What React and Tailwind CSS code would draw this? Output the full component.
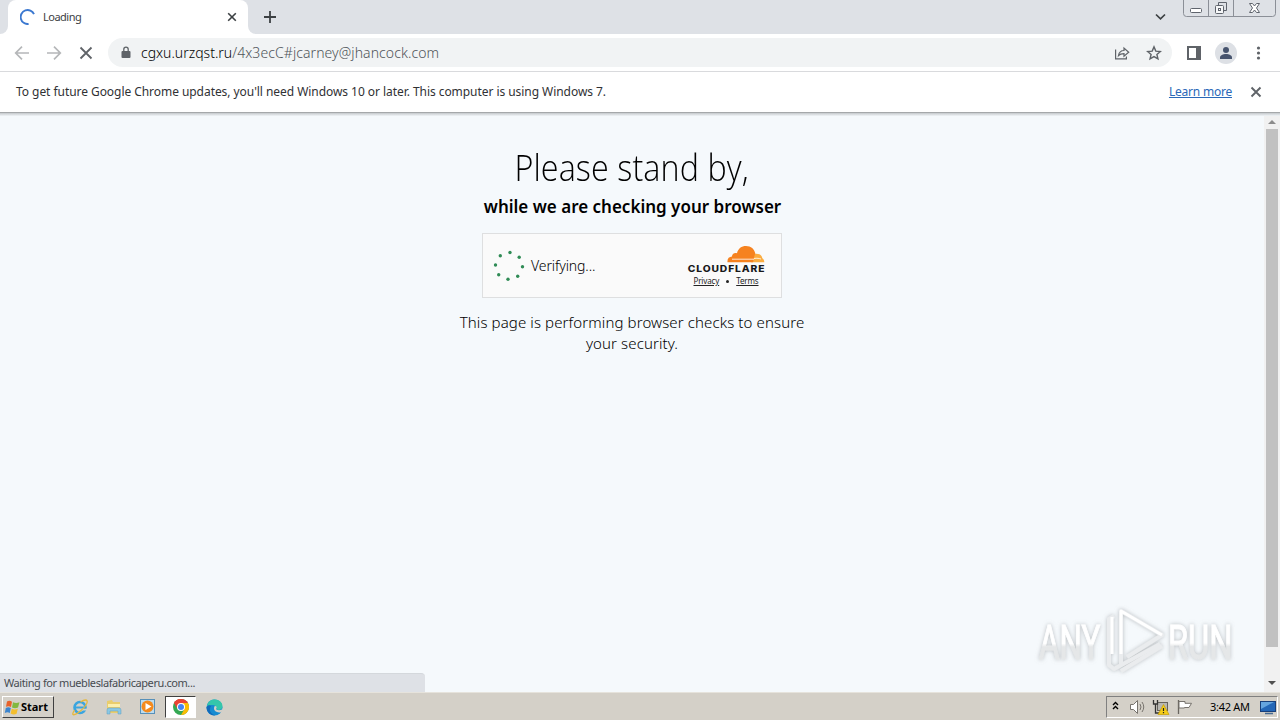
import React from "react";

function TabStrip() {
  return (
    <div className="flex h-[34px] shrink-0 items-start bg-[#dee1e6]">
      <div className="flex h-[34px] w-2 items-end bg-white">
        <div className="h-full w-full rounded-br-lg bg-[#dee1e6]" />
      </div>
      <div className="flex h-[34px] w-60 items-center rounded-t-lg bg-white pl-3 pr-[10px]">
        <svg className="h-4 w-4" viewBox="0 0 16 16" fill="none">
          <path d="M14 5.1A7 7 0 1 0 8.6 15" stroke="#3b78d0" strokeWidth="1.9" />
        </svg>
        <span className="ml-[7px] flex-1 text-[11px] leading-4 tracking-[-0.5px] text-[#3c4043]">Loading</span>
        <svg className="h-3 w-3" viewBox="0 0 12 12">
          <path d="M2.200 2.200l7.600 7.600M9.800 2.200L2.200 9.800" stroke="#3c4043" strokeWidth="1.600" />
        </svg>
      </div>
      <div className="h-[34px] w-2 bg-white">
        <div className="h-full w-full rounded-bl-lg bg-[#dee1e6]" />
      </div>
      <svg className="ml-2 mt-[11px] h-3 w-3" viewBox="0 0 12 12">
        <path d="M6 0v12M0 6h12" stroke="#3c4043" strokeWidth="1.800" />
      </svg>
      <div className="flex-1" />
      <svg className="mr-[17px] mt-3 h-[10px] w-[11px]" viewBox="0 0 11 10" fill="none">
        <path d="M1 2.500l4.500 4.400L10 2.500" stroke="#3c4043" strokeWidth="1.700" />
      </svg>
      <svg className="mr-[3px] h-[18px] w-[94px]" viewBox="0 0 94 18" fill="none">
        <path d="M.5 0v13.500q0 3 3 3h86q3 0 3-3V0M25.500 0v16M50.500 0v16" stroke="#8b8f97" />
        <rect x="7.500" y="8.500" width="11" height="4" rx="1" fill="#fff" stroke="#5f646d" />
        <path d="M35.500 5.500v-3h8v8h-3" stroke="#5f646d" />
        <rect x="32.500" y="5.500" width="8" height="8" rx="1" fill="#f6f7f8" stroke="#5f646d" />
        <rect x="35.500" y="8.500" width="2" height="2" fill="#fff" stroke="#5f646d" />
        <path d="M66.500 3.500h3l2 2.500 2-2.500h3L73.500 8l3 4.500h-3l-2-2.500-2 2.500h-3l3-4.500z" fill="#fff" stroke="#5f646d" />
      </svg>
    </div>
  );
}

function Toolbar() {
  return (
    <div className="flex h-[38px] shrink-0 items-center border-b border-[#d9dadd] bg-white">
      <svg className="ml-[14px] h-4 w-4" viewBox="0 0 16 16" fill="none" stroke="#b5b7b9" strokeWidth="1.700">
        <path d="M15 8H2M8 1.700L1.700 8 8 14.300" />
      </svg>
      <svg className="ml-4 h-4 w-4" viewBox="0 0 16 16" fill="none" stroke="#b5b7b9" strokeWidth="1.700">
        <path d="M1 8h13M8 1.700L14.300 8 8 14.300" />
      </svg>
      <svg className="ml-4 h-4 w-4" viewBox="0 0 16 16" fill="none" stroke="#5f6368" strokeWidth="1.800">
        <path d="M2.500 2.500l11 11M13.500 2.500l-11 11" />
      </svg>
      <div className="ml-[14px] flex h-[29px] w-[1064px] items-center rounded-full bg-[#f1f3f4]">
        <svg className="ml-3 h-[14px] w-3" viewBox="0 0 12 14">
          <rect x="1.500" y="5" width="9" height="7" rx="1" fill="#5f6368" />
          <path d="M3.800 5.500V3.300a2.200 2.200 0 0 1 4.400 0v2.200" fill="none" stroke="#5f6368" strokeWidth="1.300" />
        </svg>
        <span className="ml-[9px] flex-1 whitespace-nowrap text-[14px] font-light leading-5 text-[#4f5459]">
          <span className="tracking-normal text-black">cgxu.urzqst.ru</span>
          <span className="tracking-[0.080px]">/4x3ecC#jcarney@jhancock.com</span>
        </span>
        <svg className="h-4 w-4" viewBox="0 0 16 16" fill="none" stroke="#5f6368" strokeWidth="1.200">
          <path d="M1.600 4.500v9.400h10.800v-2.500M4.500 10.500c.6-3.500 2.500-5 5.500-5V3l4.700 4.200L10 11.300V8.700c-2.500 0-4.200.4-5.500 1.800z" />
        </svg>
        <svg className="ml-4 mr-[10px] h-4 w-4" viewBox="0 0 16 16" fill="none" stroke="#5f6368" strokeWidth="1.400">
          <path d="M8 1.900l1.800 4.200 4.600.4-3.500 3 1.050 4.400L8 11.600l-3.950 2.300 1.050-4.400-3.500-3 4.600-.4z" />
        </svg>
      </div>
      <svg className="ml-[15px] h-[14px] w-[14px]" viewBox="0 0 14 14">
        <rect x="1" y="1" width="12" height="12" fill="none" stroke="#5f6368" strokeWidth="2" />
        <rect x="9" y="1" width="4.500" height="12" fill="#5f6368" />
      </svg>
      <svg className="ml-[14px] h-[22px] w-[22px]" viewBox="0 0 22 22">
        <circle cx="11" cy="11" r="11" fill="#dde0e5" />
        <circle cx="11" cy="8" r="3" fill="#47546e" />
        <path d="M5 17v-1.500c0-2 3-3.500 6-3.500s6 1.500 6 3.500V17z" fill="#47546e" />
      </svg>
      <svg className="ml-4 h-4 w-4" viewBox="0 0 16 16" fill="#5f6368">
        <circle cx="5.500" cy="3" r="1.600" />
        <circle cx="5.500" cy="8" r="1.600" />
        <circle cx="5.500" cy="13" r="1.600" />
      </svg>
    </div>
  );
}

function InfoBar() {
  return (
    <div className="flex h-10 shrink-0 items-center bg-white pl-4">
      <span className="flex-1 whitespace-nowrap text-[12px] leading-4 tracking-[-0.053px] text-[#303134]">
        To get future Google Chrome updates, you'll need Windows 10 or later. This computer is using Windows 7.
      </span>
      <a className="whitespace-nowrap text-[12px] leading-4 tracking-[-0.220px] text-[#2a68b8] underline">Learn more</a>
      <svg className="ml-[18px] mr-[18px] h-3 w-3" viewBox="0 0 12 12">
        <path d="M1.500 1.500l9 9M10.500 1.500l-9 9" stroke="#5f6368" strokeWidth="1.900" />
      </svg>
    </div>
  );
}

function CloudflareLogo() {
  return (
    <svg className="h-[27px] w-[78px]" viewBox="0 0 78 27">
      <path d="M64 17.300c1-3 .7-5.500 2-8 6-1.500 9 1 9.300 4 1.500.8 2 2.200 2 4z" fill="#fbad41" />
      <path d="M40.500 17.300c-.4-3.500 1.500-5.500 4.500-5.700 0-3 2.800-4.300 5-3.300C51 3.500 54.500 1 59 1c5 0 8.500 3 9.300 7.500-1.200 2.500-1.300 5.500-2.300 8.800z" fill="#f6821f" />
      <path d="M45 14.200h22M67 13.500c3-.6 5.500 0 7 .5" stroke="#fff" strokeWidth=".8" fill="none" />
      <text transform="translate(.8 26.500) scale(1.170 1)" textLength="65.500" lengthAdjust="spacing" fontFamily="Inter, sans-serif" fontWeight="800" fontSize="8.800" fill="#18181b">CLOUDFLARE</text>
    </svg>
  );
}

function Challenge() {
  return (
    <div className="mt-[14px] flex h-[65px] w-[300px] items-start border border-[#dedfe0] bg-[#fafafa]">
      <svg className="ml-[10px] mt-4 h-8 w-8" viewBox="0 0 32 32" fill="#2f8b55">
        <circle cx="17" cy="2.500" r="1.700" />
        <circle cx="26.200" cy="7.200" r="1.700" />
        <circle cx="29.500" cy="16.700" r="1.700" />
        <circle cx="24.700" cy="26.200" r="1.700" />
        <circle cx="15" cy="29.300" r="1.700" />
        <circle cx="5.700" cy="24.700" r="1.700" />
        <circle cx="2.500" cy="15" r="1.700" />
        <circle cx="7.300" cy="5.700" r="1.700" />
      </svg>
      <span className="ml-[6px] mt-[22px] flex-1 text-[14px] font-light leading-5 tracking-[-0.100px] text-black">Verifying...</span>
      <div className="mr-4 mt-[11px] flex flex-col items-center">
        <CloudflareLogo />
        <div className="mt-[4px] flex items-center gap-[7px] text-[8px] leading-[10px] tracking-[-0.140px] text-[#232323]">
          <span className="underline">Privacy</span>
          <span className="h-[3px] w-[3px] rounded-full bg-[#232323]" />
          <span className="underline">Terms</span>
        </div>
      </div>
    </div>
  );
}

function Watermark() {
  return (
    <svg className="absolute left-[1030px] top-[492px] h-[74px] w-[218px]" viewBox="0 0 218 74">
      <defs>
        <linearGradient id="wm" x1="0" y1="0" x2="0" y2="1">
          <stop offset=".52" stopColor="#ffffff" />
          <stop offset=".58" stopColor="#e5e7e8" />
        </linearGradient>
        <filter id="glow" x="-10%" y="-20%" width="120%" height="140%">
          <feDropShadow dx="0" dy="0" stdDeviation="2" floodColor="#85898c" floodOpacity=".55" />
        </filter>
      </defs>
      <g filter="url(#glow)" fontFamily="Roboto, sans-serif" fontSize="49" fill="url(#wm)" stroke="url(#wm)" strokeWidth="1">
        <text transform="translate(9 54) scale(.640 1)">ANY</text>
        <text transform="translate(138 54) scale(.665 1)">RUN</text>
        <g fill="none" strokeWidth="4" strokeLinejoin="round">
          <path d="M84 11l-5 3v46l5 4 46-25" stroke="#eaecee" />
          <path d="M91 66l41-25M91 61V6l41 24-35 22" stroke="#eaecee" />
          <path d="M82 12v37M91 49V6l41 24" stroke="#fff" strokeWidth="3" />
        </g>
      </g>
    </svg>
  );
}

function Page() {
  return (
    <div className="relative flex h-[580px] shrink-0 border-t border-[#a5a8aa] bg-[#f5f9fc]">
      <div className="absolute inset-x-0 top-0 h-[3px] bg-linear-to-b from-[#c5c9cc] to-[#f0f4f7]" />
      <main className="flex flex-1 flex-col items-center text-black">
        <h1 className="mt-[31px] scale-x-[0.897] whitespace-nowrap font-['Open_Sans'] text-[36px] font-light leading-[48px] tracking-[0.100px]">Please stand by,</h1>
        <h2 className="ml-px mt-[3px] whitespace-nowrap text-[17px] font-semibold leading-6">while we are checking your browser</h2>
        <Challenge />
        <p className="mt-[14px] w-[370px] text-center text-[15px] font-light leading-[21px] tracking-[0.110px]">
          This page is performing browser checks to ensure your security.
        </p>
      </main>
      <div className="flex w-4 flex-col items-center bg-[#f1f1f1]">
        <svg className="h-4 w-4 shrink-0" viewBox="0 0 16 16"><path d="M4 11l4-4 4 4z" fill="#8c8c8c" /></svg>
        <div className="h-[518px] w-3 bg-[#c1c1c1]" />
        <div className="flex-1" />
        <svg className="mb-[1px] h-4 w-4 shrink-0" viewBox="0 0 16 16"><path d="M4 6h8l-4 4z" fill="#505050" /></svg>
      </div>
      <Watermark />
      <div className="absolute bottom-0 left-0 flex h-[19px] w-[425px] items-center rounded-tr border-t border-[#d4d8dc] bg-[#dee1e6] pl-1 text-[11px] leading-4 text-[#474b50]">
        <span className="whitespace-nowrap tracking-[-0.420px]">Waiting for muebleslafabricaperu.com...</span>
      </div>
    </div>
  );
}

function IeIcon() {
  return (
    <svg className="h-[18px] w-[18px]" viewBox="0 0 18 18" fill="none">
      <circle cx="9" cy="9.500" r="5.500" stroke="#3aa5df" strokeWidth="2.600" />
      <path d="M4 9.500h11" stroke="#3aa5df" strokeWidth="2" />
      <path d="M12 11.600h5" stroke="#d4d0c8" strokeWidth="1.800" />
      <path d="M3.500 12C-1 19 4 17.500 10 12.500S18 2 14.500 2C13 2 11 3 9.500 4" stroke="#e6b83c" strokeWidth="1.300" />
    </svg>
  );
}

function FolderIcon() {
  return (
    <svg className="h-[18px] w-[18px]" viewBox="0 0 18 18">
      <path d="M2 3l5-1 1 2h7v11H2z" fill="#e9cd6c" />
      <path d="M3 6h12v3H3z" fill="#fbefad" />
      <path d="M2 16v-4q0-2 2-2h10q2 0 2 2v4h-3v-3H5v3z" fill="#8ac8e4" stroke="#5d9fc0" strokeWidth=".5" />
    </svg>
  );
}

function PlayerIcon() {
  return (
    <svg className="h-[18px] w-[18px]" viewBox="0 0 18 18">
      <rect x="1.500" y="1.500" width="14" height="14" fill="#bcdcf0" stroke="#5790b9" />
      <circle cx="8.500" cy="8.500" r="6" fill="#f48a1d" />
      <path d="M6.500 5v7l6-3.500z" fill="#fff" />
    </svg>
  );
}

function ChromeIcon() {
  return (
    <svg className="h-4 w-4" viewBox="0 0 16 16">
      <circle cx="8" cy="8" r="8" fill="#34a853" />
      <path d="M8 8L1.070 4A8 8 0 0 1 14.930 4z" fill="#ea4335" />
      <path d="M8 4h6.930A8 8 0 0 1 8 16l3.500-6z" fill="#fbbc04" />
      <path d="M1.070 4A8 8 0 0 1 8 0v4.200L4.500 10z" fill="#ea4335" />
      <circle cx="8" cy="8" r="4" fill="#fff" />
      <circle cx="8" cy="8" r="3" fill="#4285f4" />
    </svg>
  );
}

function EdgeIcon() {
  return (
    <svg className="h-[17px] w-[17px]" viewBox="0 0 17 17">
      <circle cx="8.500" cy="8.500" r="8" fill="#168bd1" />
      <path d="M1 7C2 2 5 .5 9 .5c5 0 8 4 7.400 7.500-.4 2.500-3 3.500-6 2.500 1-3-2-5-5-4.500-2 .2-3.500.7-4.400 1z" fill="#35c6ab" />
      <path d="M5 7c-3 5 1 9 5 9.300-5 1-9.500-3-9.500-8C2 6 4 6 5 7z" fill="#126bba" />
      <path d="M9 7c2 0 2 2 1 3 1 1.500 4 1.500 6.500.3l.5 1.700-2 1.200c-4 1-7-1.200-7-3.400 0-1.500.3-2.500 1-2.800z" fill="#d4d0c8" />
    </svg>
  );
}

function Taskbar() {
  return (
    <div className="flex h-[28px] shrink-0 items-start border-t border-[#e6e3dc] bg-[#d4d0c8] pt-[3px] font-['Noto_Sans']">
      <button className="ml-[2px] flex h-[22px] w-[52px] items-center border border-b-[#404040] border-l-white border-r-[#404040] border-t-white pl-px text-[11px] font-bold leading-4 tracking-[-0.050px] text-black">
        <svg className="h-[17px] w-[17px] shrink-0" viewBox="0 0 17 17">
          <path d="M3 2.500q2.500-1.500 5 .3L7 8Q4.500 6.500 2 7.800z" fill="#e8622a" />
          <path d="M9 3.200q3 1.500 6.500 0L14 8.500q-3 1.500-6 0z" fill="#82b840" />
          <path d="M1.800 9q2.500-1.300 5 0L5.800 14Q3.500 12.500.8 14z" fill="#3c85ce" />
          <path d="M7.800 9.700q3 1.400 6 0l-1.200 5q-3 1.500-6-.3z" fill="#f4be2c" />
        </svg>
        Start
      </button>
      <div className="ml-[17px] mt-[2px] flex items-center gap-4">
        <IeIcon />
        <FolderIcon />
        <PlayerIcon />
      </div>
      <div className="ml-[8px] flex h-[22px] w-[31px] items-center justify-center border border-b-white border-l-[#404040] border-r-white border-t-[#404040] bg-white">
        <ChromeIcon />
      </div>
      <div className="ml-[10px] mt-[3px]"><EdgeIcon /></div>
      <div className="flex-1" />
      <div className="mr-[2px] flex h-[22px] w-[172px] items-center border border-b-white border-l-[#808080] border-r-white border-t-[#808080]">
        <svg className="ml-[4px] h-3 w-[9px]" viewBox="0 0 9 12" fill="none" stroke="#000" strokeWidth="1.400">
          <path d="M2 4l2.500-2.500L7 4M2 8l2.500-2.500L7 8" />
        </svg>
        <svg className="ml-[9px] h-[18px] w-[18px]" viewBox="0 0 18 18" fill="none" stroke="#77736d">
          <path d="M1.500 6.500h3l4-4v13l-4-4h-3z" fill="#fff" />
          <path d="M11 6q2 3 0 6M13 4q3.500 5 0 10" />
        </svg>
        <svg className="ml-[5px] h-[18px] w-[18px]" viewBox="0 0 18 18" fill="none">
          <rect x="5.500" y="4.500" width="10" height="8" fill="#b8b7b2" stroke="#65625d" />
          <path d="M1.500 2v4h4V2M3.500 6v9h5" stroke="#333" strokeWidth="1.300" />
          <path d="M11.500 6.500L17 16.500H6z" fill="#f5cd18" stroke="#c59c00" strokeWidth=".7" />
          <path d="M11.500 10v3M11.500 14v1.300" stroke="#222" strokeWidth="1.200" />
        </svg>
        <svg className="ml-[6px] h-[18px] w-[18px]" viewBox="0 0 18 18" fill="none">
          <path d="M2.500 2v14" stroke="#69655f" strokeWidth="1.300" />
          <path d="M3 3.500h6v1.800h6.500L13 9.500H8.500V10H3z" fill="#fff" stroke="#77736d" />
        </svg>
        <span className="ml-[16px] w-[42px] whitespace-nowrap text-[11px] leading-4 tracking-[-0.300px] text-black">3:42 AM</span>
        <svg className="ml-[8px] h-[15px] w-4" viewBox="0 0 16 15">
          <rect x=".5" y="1.500" width="15" height="10" fill="#2467b7" stroke="#183f7a" />
          <path d="M1 2h13L1 9z" fill="#65a5df" />
          <path d="M5 13.500h8" stroke="#476a91" strokeWidth="1.500" />
        </svg>
      </div>
    </div>
  );
}

export default function App() {
  return (
    <div className="flex h-[720px] w-[1280px] flex-col overflow-hidden bg-white font-['Noto_Sans',sans-serif]">
      <TabStrip />
      <Toolbar />
      <InfoBar />
      <Page />
      <Taskbar />
    </div>
  );
}
